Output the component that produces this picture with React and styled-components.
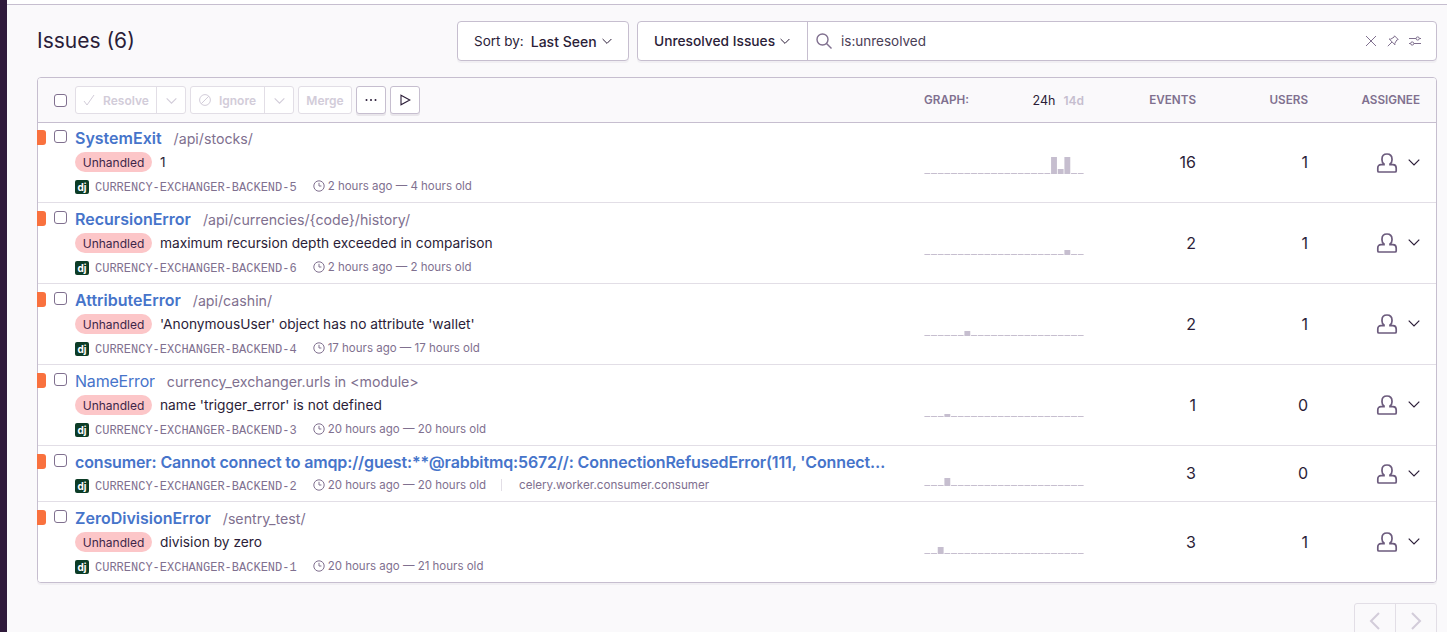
import React from "react";
import styled, { createGlobalStyle } from "styled-components";

const Global = createGlobalStyle`
  html, body { margin: 0; padding: 0; height: 632px; overflow: hidden; background: #faf9fb; }
  body { font-family: Inter, "Noto Sans", sans-serif; color: #2b1d38; }
  * { box-sizing: border-box; }
`;

const Page = styled.div`display: flex; height: 632px; overflow: hidden;`;
const Sidebar = styled.aside`width: 7px; flex: none; background: #2f1a3b;`;
const Main = styled.main`flex: 1; min-width: 0; display: flex; flex-direction: column;`;
const TopEdge = styled.div`height: 5px; flex: none; background: #fff; border-bottom: 1px solid #c6becf;`;
const Content = styled.div`padding: 16px 10px 0 30px; display: flex; flex-direction: column;`;

const Head = styled.header`display: flex; align-items: center; height: 40px; margin-bottom: 16px;`;
const Title = styled.h1`margin: 0 0 2px; flex: 1; font-size: 21px; font-weight: 400; color: #2b1d38;`;
const HeadButton = styled.button`
  height: 40px; padding: 0 16px; display: flex; align-items: center; gap: 5px; background: #fff;
  border: 1px solid #c6becf; border-radius: 4px; box-shadow: 0 2px 0 rgba(37,11,54,.04);
  font: 400 13.5px Inter, sans-serif; color: #2b1d38; white-space: nowrap;
`;
const SortButton = styled(HeadButton)`width: 172px; margin-right: 8px;`;
const Strong = styled.b`font-weight: 500; font-size: 14px; margin-left: 2px;`;
const SearchGroup = styled.div`
  width: 800px; height: 40px; display: flex; background: #fff; border: 1px solid #c6becf;
  border-radius: 4px; box-shadow: 0 2px 0 rgba(37,11,54,.04);
`;
const FilterButton = styled.div`
  width: 171px; flex: none; display: flex; align-items: center; gap: 5px; padding-left: 17px;
  border-right: 1px solid #c6becf; font-size: 13.75px; font-weight: 500; white-space: nowrap; margin: -1px 0 -1px -1px;
`;
const SearchBox = styled.div`flex: 1; display: flex; align-items: center; padding: 0 15px 0 8px; color: #80708f;`;
const SearchText = styled.span`flex: 1; margin-left: 9px; font-size: 13.5px; color: #4a3e56;`;
const SearchTools = styled.div`display: flex; gap: 10px; align-items: center; color: #80708f;`;

const Panel = styled.section`
  border: 1px solid #c6becf; border-radius: 4px; background: #fff;
  box-shadow: 0 2px 0 rgba(37,11,54,.04);
`;
const Toolbar = styled.div`
  height: 45px; display: flex; align-items: center; padding: 0 16px; background: #faf9fb;
  border-bottom: 1px solid #c6becf; border-radius: 3px 3px 0 0;
`;
const Check = styled.span`
  width: 13px; height: 13px; flex: none; display: block; background: #fff; border: 1px solid #80708f;
  border-radius: 3px; margin-right: 8px;
`;
const Actions = styled.div`display: flex; gap: 4px; width: 849px;`;
const ButtonGroup = styled.div`
  height: 28px; display: flex; align-items: stretch; background: #fff; border: 1px solid #e2dee6; border-radius: 3px;
  color: #d2ccd9; font-size: 12px; font-weight: 600;
`;
const GroupLabel = styled.span`display: flex; align-items: center; gap: 8px; padding: 0 7px; width: ${p => p.$w}px; justify-content: center;`;
const GroupCaret = styled.span`display: flex; align-items: center; justify-content: center; width: 29px; border-left: 1px solid #e2dee6;`;
const MergeLabel = styled.span`display: flex; align-items: center; justify-content: center; width: 52px;`;
const IconButton = styled.button`
  width: 30px; height: 28px; padding: 0; display: flex; align-items: center; justify-content: center;
  background: #fff; border: 1px solid #c6becf; border-radius: 3px; box-shadow: 0 2px 0 rgba(37,11,54,.08); color: #2b1d38;
`;

const HeadCell = styled.div`
  font-size: 11.7px; font-weight: 600; color: #80708f; text-transform: uppercase; text-align: right; flex: none; width: 112px;
`;
const GraphHead = styled(HeadCell)`width: 160px; display: flex; align-items: center; text-align: left;`;
const GraphLabel = styled.span`flex: 1;`;
const Range = styled.span`
  margin-left: ${p => p.$gap || 0}px; text-transform: none; font-weight: ${p => p.$on ? 400 : 600};
  color: ${p => p.$on ? "#2b1d38" : "#c6becf"}; font-size: ${p => p.$on ? 12.5 : 12}px;
`;

const Row = styled.article`
  --lead: 1px;
  position: relative; display: flex; height: ${p => p.$compact ? 56 : 81}px; padding: 0 16px;
  border-bottom: 1px solid #e2dee6; background: #fff;
  &:first-of-type { height: 80px; --lead: 0px; }
  &:last-of-type { height: 80px; border-bottom: 0; border-radius: 0 0 3px 3px; }
`;
const Level = styled.span`
  position: absolute; left: -1px; top: calc(7px + var(--lead)); width: 9px; height: 15px; background: #f9713e;
  border-radius: 0 3px 3px 0;
`;
const RowCheck = styled(Check)`margin-top: calc(7px + var(--lead));`;
const Body = styled.div`
  width: 849px; flex: none; padding: calc(5px + var(--lead)) 36px 0 0; display: flex; flex-direction: column; min-width: 0;
`;
const TitleLine = styled.div`display: flex; align-items: baseline; gap: 12px; height: 20px; line-height: 20px; white-space: nowrap; min-width: 0;`;
const IssueTitle = styled.a`
  font-size: 16px; font-weight: ${p => p.$seen ? 400 : 600}; color: #4674ca; overflow: hidden; text-overflow: ellipsis;
  letter-spacing: ${p => p.$tight ? -0.14 : p.$seen ? -0.2 : 0}px;
`;
const Location = styled.span`font-size: 14.2px; color: #80708f;`;
const MessageLine = styled.div`display: flex; align-items: center; gap: 8px; height: 20px; margin-top: 4px;`;
const Tag = styled.span`
  height: 20px; width: 77px; display: flex; align-items: center; justify-content: center; border-radius: 10px; background: #fcc6c8; font-size: 12px; color: #3e2649;
`;
const Message = styled.span`font-size: 13.75px; color: #2b1d38;`;
const MetaLine = styled.div`display: flex; align-items: center; height: 16px; margin-top: ${p => p.$compact ? 5 : 6}px; color: #80708f; font-size: 11.5px; white-space: nowrap;`;
const Logo = styled.span`
  width: 14px; height: 14px; flex: none; margin-top: 2px; background: #0c3c26; color: #fff; border-radius: 2px; font: 700 10px/14px Inter, sans-serif; text-align: center;
`;
const Short = styled.span`font-family: "Liberation Mono", monospace; font-size: 12px; margin: 0 16px 0 6px; padding-top: 4px; color: #80708f;`;
const Clock = styled.span`display: flex; margin-right: 3px;`;
const Culprit = styled.span`border-left: 1px solid #e2dee6; margin-left: 15px; padding-left: 17px; height: 12px; line-height: 12px; font-size: 11.65px; color: #80708f;`;

const Spark = styled.div`width: 160px; flex: none; display: flex; align-items: center; padding-top: calc(var(--lead) * 2);`;
const Count = styled.div`
  width: 112px; flex: none; display: flex; align-items: center; justify-content: flex-end; font-size: 16px; color: #2b1d38;
  padding-bottom: calc(2px - var(--lead));
`;
const Assignee = styled.div`
  width: 112px; flex: none; display: flex; align-items: center; justify-content: flex-end; gap: 10px; color: #6c5b7d;
  & > svg:last-child { margin-top: -2px; }
`;

const Pager = styled.nav`
  margin: 20px 0 0 auto; width: 83px; height: 36px; display: flex; border: 1px solid #e2dee6; border-radius: 3px; flex: none;
`;
const PageButton = styled.span`flex: 1; display: flex; align-items: center; justify-content: center; color: #d2ccd9; & + & { border-left: 1px solid #e2dee6; }`;

const Chevron = ({ size = 10, dir = "down", color = "currentColor" }) => {
  const paths = { down: "M0.6 3 L5 7.4 L9.4 3", left: "M7 1 L3 5 L7 9", right: "M3 1 L7 5 L3 9" };
  return (
    <svg width={size} height={size} viewBox="0 0 10 10" fill="none" stroke={color} strokeWidth="1" aria-hidden="true">
      <path d={paths[dir]} />
    </svg>
  );
};

const Sparkline = ({ bars }) => (
  <svg width="160" height="24" viewBox="0 0 160 24" aria-hidden="true">
    {Array.from({ length: 24 }).map((_, i) => {
      const w = 160 / 24;
      const h = bars[i] || 1;
      return <rect key={i} x={i * w + 0.4} y={23 - h} width={w - 0.8} height={h} fill="#c6becf" />;
    })}
  </svg>
);

const ClockIcon = () => (
  <svg width="12" height="12" viewBox="0 0 12 12" fill="none" stroke="#80708f" strokeWidth="1" aria-hidden="true">
    <circle cx="6" cy="6" r="5.2" />
    <path d="M6 2.8 V6 H8.4" />
  </svg>
);

const UserIcon = () => (
  <svg width="22" height="20" viewBox="0 0 22 20" fill="none" stroke="#6c5b7d" strokeWidth="1.7" aria-hidden="true">
    <path d="M8 11 V11.6 H5 C3 11.6 1.8 13 1.8 15 V18 C1.8 18.7 2.3 19 3 19 H19 C19.7 19 20.2 18.7 20.2 18 V15 C20.2 13 19 11.6 17 11.6 H14 V11 C15.2 10.3 16 9 16 7 V6 C16 3 14 1 11 1 C8 1 6 3 6 6 V7 C6 9 6.8 10.3 8 11 Z" />
  </svg>
);

const issues = [
  { title: "SystemExit", loc: "/api/stocks/", msg: "1", n: 5, time: "2 hours ago — 4 hours old", events: 16, users: 1, bars: { 19: 17, 20: 5, 21: 17 } },
  { title: "RecursionError", loc: "/api/currencies/{code}/history/", msg: "maximum recursion depth exceeded in comparison", n: 6, time: "2 hours ago — 2 hours old", events: 2, users: 1, bars: { 21: 5 } },
  { title: "AttributeError", loc: "/api/cashin/", msg: "'AnonymousUser' object has no attribute 'wallet'", n: 4, time: "17 hours ago — 17 hours old", events: 2, users: 1, bars: { 6: 5 } },
  { title: "NameError", seen: true, loc: "currency_exchanger.urls in <module>", msg: "name 'trigger_error' is not defined", n: 3, time: "20 hours ago — 20 hours old", events: 1, users: 0, bars: { 3: 3 } },
  { title: "consumer: Cannot connect to amqp://guest:**@rabbitmq:5672//: ConnectionRefusedError(111, 'Connection refused')", compact: true, n: 2, time: "20 hours ago — 20 hours old", culprit: "celery.worker.consumer.consumer", events: 3, users: 0, bars: { 3: 8 } },
  { title: "ZeroDivisionError", loc: "/sentry_test/", msg: "division by zero", n: 1, time: "20 hours ago — 21 hours old", events: 3, users: 1, bars: { 2: 7 } },
];

export default function App() {
  return (
    <Page>
      <Global />
      <Sidebar />
      <Main>
        <TopEdge />
        <Content>
          <Head>
            <Title>Issues (6)</Title>
            <SortButton>Sort by: <Strong>Last Seen</Strong><Chevron /></SortButton>
            <SearchGroup>
              <FilterButton>Unresolved Issues<Chevron /></FilterButton>
              <SearchBox>
                <svg width="16" height="16" viewBox="0 0 16 16" fill="none" stroke="#80708f" strokeWidth="1.4" aria-hidden="true">
                  <circle cx="6.5" cy="6.5" r="5.5" /><path d="M10.5 10.5 L15.5 15.5" />
                </svg>
                <SearchText>is:unresolved</SearchText>
                <SearchTools>
                  <svg width="12" height="12" viewBox="0 0 12 12" fill="none" stroke="#80708f" strokeWidth="1" aria-hidden="true"><path d="M1 1 L11 11 M11 1 L1 11" /></svg>
                  <svg width="12" height="12" viewBox="0 0 12 12" fill="none" stroke="#80708f" strokeWidth="1" aria-hidden="true"><path d="M7.5 .8 L11.2 4.5 L9.8 5 L7.8 8.4 L8 9.8 L2.2 4 L3.6 4.2 L7 2.2 Z M5 7 L.8 11.2" /></svg>
                  <svg width="12" height="12" viewBox="0 0 12 12" fill="none" stroke="#80708f" strokeWidth="1" aria-hidden="true"><path d="M0 3.5 H7 M10.5 3.5 H12 M0 8.5 H1.5 M5 8.5 H12" /><circle cx="8.7" cy="3.5" r="1.6" /><circle cx="3.2" cy="8.5" r="1.6" /></svg>
                </SearchTools>
              </SearchBox>
            </SearchGroup>
          </Head>

          <Panel>
            <Toolbar>
              <Check />
              <Actions>
                <ButtonGroup>
                  <GroupLabel $w={80}>
                    <svg width="12" height="12" viewBox="0 0 12 12" fill="none" stroke="#d2ccd9" strokeWidth="1" aria-hidden="true"><path d="M1 7 L4 11 L11 1" /></svg>
                    Resolve
                  </GroupLabel>
                  <GroupCaret><Chevron size={11} color="#d2ccd9" /></GroupCaret>
                </ButtonGroup>
                <ButtonGroup>
                  <GroupLabel $w={73}>
                    <svg width="12" height="12" viewBox="0 0 12 12" fill="none" stroke="#d2ccd9" strokeWidth="1" aria-hidden="true"><circle cx="6" cy="6" r="5.4" /><path d="M2.2 9.8 L9.8 2.2" /></svg>
                    Ignore
                  </GroupLabel>
                  <GroupCaret><Chevron size={11} color="#d2ccd9" /></GroupCaret>
                </ButtonGroup>
                <ButtonGroup><MergeLabel>Merge</MergeLabel></ButtonGroup>
                <IconButton aria-label="More">
                  <svg width="12" height="12" viewBox="0 0 12 12" fill="#2b1d38" aria-hidden="true"><circle cx="1.5" cy="6" r="1" /><circle cx="6" cy="6" r="1" /><circle cx="10.5" cy="6" r="1" /></svg>
                </IconButton>
                <IconButton aria-label="Play">
                  <svg width="12" height="12" viewBox="0 0 12 12" fill="none" stroke="#2b1d38" strokeWidth="1.1" aria-hidden="true"><path d="M2 1.2 L10.8 6 L2 10.8 Z" /></svg>
                </IconButton>
              </Actions>
              <GraphHead>
                <GraphLabel>Graph:</GraphLabel>
                <Range $on>24h</Range>
                <Range $gap={8}>14d</Range>
              </GraphHead>
              <HeadCell>Events</HeadCell>
              <HeadCell>Users</HeadCell>
              <HeadCell>Assignee</HeadCell>
            </Toolbar>

            {issues.map(it => (
              <Row key={it.n} $compact={it.compact}>
                <Level />
                <RowCheck />
                <Body>
                  <TitleLine>
                    <IssueTitle $seen={it.seen} $tight={it.compact}>{it.title}</IssueTitle>
                    {it.loc && <Location>{it.loc}</Location>}
                  </TitleLine>
                  {it.msg && (
                    <MessageLine>
                      <Tag>Unhandled</Tag>
                      <Message>{it.msg}</Message>
                    </MessageLine>
                  )}
                  <MetaLine $compact={it.compact}>
                    <Logo>dj</Logo>
                    <Short>CURRENCY-EXCHANGER-BACKEND-{it.n}</Short>
                    <Clock><ClockIcon /></Clock>
                    {it.time}
                    {it.culprit && <Culprit>{it.culprit}</Culprit>}
                  </MetaLine>
                </Body>
                <Spark><Sparkline bars={it.bars} /></Spark>
                <Count>{it.events}</Count>
                <Count>{it.users}</Count>
                <Assignee><UserIcon /><Chevron size={12} color="#2b1d38" /></Assignee>
              </Row>
            ))}
          </Panel>

          <Pager>
            <PageButton><Chevron size={20} dir="left" /></PageButton>
            <PageButton><Chevron size={20} dir="right" /></PageButton>
          </Pager>
        </Content>
      </Main>
    </Page>
  );
}
